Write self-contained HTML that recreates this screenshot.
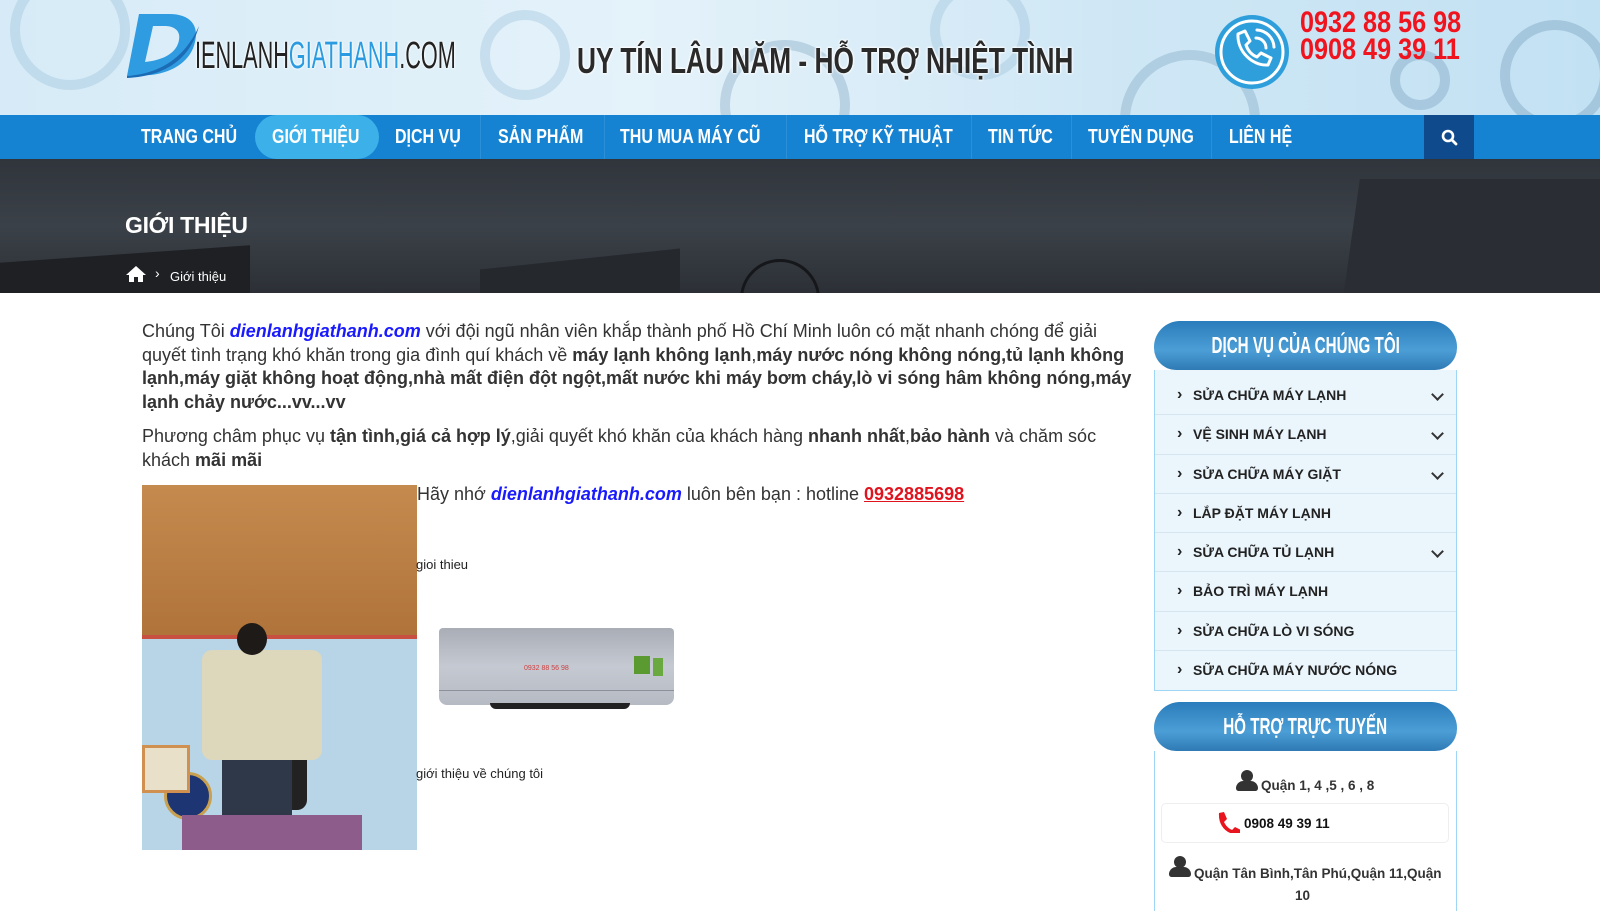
<!DOCTYPE html>
<html><head><meta charset="utf-8"><style>
*{margin:0;padding:0;box-sizing:border-box}
body{width:1600px;height:902px;overflow:hidden;background:#fff;font-family:"Liberation Sans",Arial,sans-serif;position:relative}
.hdr{position:absolute;left:0;top:0;width:1600px;height:115px;background:linear-gradient(90deg,#d6ebf7 0%,#e4f2fa 40%,#cfe7f5 70%,#c2e1f3 100%);overflow:hidden}
.gear{position:absolute;border-radius:50%;border:10px solid rgba(150,190,215,.35)}
.sx{display:inline-block;transform-origin:left center;white-space:nowrap}
.nav{position:absolute;left:0;top:115px;width:1600px;height:44px;background:#1583d2}
.nav a{position:absolute;top:0;height:44px;line-height:44px;color:#fff;font-weight:bold;font-size:20px;text-decoration:none;transform:scaleX(.8);transform-origin:left center;white-space:nowrap}
.sep{position:absolute;top:0;width:1px;height:44px;background:#2c90d8}
.ban{position:absolute;left:0;top:159px;width:1600px;height:134px;background:linear-gradient(180deg,#30353c 0%,#3b4148 50%,#2c3036 100%);overflow:hidden}
.main p{font-size:18px;line-height:23.5px;color:#333}
.lk{color:#1a1aff;font-weight:bold;font-style:italic}
.side{position:absolute;left:1154px;width:303px}
.sh{height:49px;border-radius:26px 26px 22px 22px;background:linear-gradient(180deg,#2a7dbb 0%,#4c9ed6 60%,#2e7ab5 100%);color:#fff;text-align:center;line-height:49px;font-size:23px;font-weight:bold}
.sh span{display:inline-block;transform:scaleX(.66);white-space:nowrap}
.it{height:39.3px;background:#eaf5fc;border-bottom:1.5px solid #d6e6f0;position:relative;font-size:14px;font-weight:bold;color:#222;line-height:39px;padding-left:38px}
.it:before{content:"›";position:absolute;left:22px;top:-1px;font-size:16px}
.chev{position:absolute;right:14px;top:14px;width:9px;height:9px;border-right:2.5px solid #333;border-bottom:2.5px solid #333;transform:rotate(45deg)}
.usr{position:absolute;width:22px;height:22px}
.usr:before{content:"";position:absolute;left:5px;top:0;width:12px;height:12px;border-radius:50%;background:#333}
.usr:after{content:"";position:absolute;left:0;top:11px;width:22px;height:10px;border-radius:8px 8px 3px 3px;background:#333}
</style></head><body>
<div class="hdr">
 <div class="gear" style="left:10px;top:-30px;width:120px;height:120px"></div>
 <div class="gear" style="left:480px;top:10px;width:90px;height:90px"></div>
 <div class="gear" style="left:720px;top:40px;width:130px;height:130px;border-color:rgba(120,160,190,.35)"></div>
 <div class="gear" style="left:930px;top:-20px;width:100px;height:100px"></div>
 <div class="gear" style="left:1120px;top:50px;width:140px;height:140px;border-color:rgba(120,160,190,.35)"></div>
 <div class="gear" style="left:1500px;top:20px;width:110px;height:110px;border-color:rgba(120,160,190,.4)"></div>
 <div class="gear" style="left:1390px;top:50px;width:60px;height:60px;border-color:rgba(120,160,190,.4)"></div>
 <svg style="position:absolute;left:125px;top:12px" width="76" height="66" viewBox="0 0 76 66"><path d="M14 2 H44 C66 2 74 14 70 30 C66 48 50 60 26 63 L2 64 Z M28 14 L20 50 C40 48 52 40 54 28 C56 18 48 14 40 14 Z" fill="#2f9be0" fill-rule="evenodd"/><path d="M2 64 C30 62 58 50 74 14 C66 44 44 64 2 66Z" fill="#1b6bb5"/></svg>
 <div class="sx" style="position:absolute;left:195px;top:35px;font-size:38px;color:#222;transform:scaleX(.57);text-shadow:0 0 3px #fff,0 0 3px #fff">IENLANH<span style="color:#2a9be0">GIATHANH</span>.COM</div>
 <div class="sx" style="position:absolute;left:577px;top:40px;font-size:36px;font-weight:bold;color:#2a2a2a;transform:scaleX(.73);text-shadow:0 0 3px #fff,0 0 3px #fff,0 0 3px #fff">UY TÍN LÂU NĂM - HỖ TRỢ NHIỆT TÌNH</div>
 <svg style="position:absolute;left:1212px;top:12px" width="80" height="80" viewBox="0 0 80 80"><circle cx="40" cy="40" r="37" fill="#2f9fdc"/><circle cx="40" cy="40" r="31" fill="none" stroke="#fff" stroke-width="3"/><path d="M26 22 l7 -3 5 10 -4 4 c2 6 6 10 11 12 l4 -4 10 5 -3 7 c-16 1 -31 -14 -30 -31z" fill="none" stroke="#fff" stroke-width="3" stroke-linejoin="round"/><path d="M44 26 a10 10 0 0 1 10 10 M45 18 a18 18 0 0 1 17 17" fill="none" stroke="#fff" stroke-width="3" stroke-linecap="round"/></svg>
 <div class="sx" style="position:absolute;left:1300px;top:9px;font-size:30px;font-weight:bold;color:#f0141e;line-height:27px;transform:scaleX(.84)">0932 88 56 98<br>0908 49 39 11</div>
</div>
<div class="nav">
 <a style="left:141px">TRANG CHỦ</a>
 <div style="position:absolute;left:255px;top:0;width:124px;height:44px;border-radius:22px;background:#3cb1e9"></div>
 <a style="left:272px">GIỚI THIỆU</a>
 <a style="left:395px">DỊCH VỤ</a><div class="sep" style="left:480px"></div>
 <a style="left:498px">SẢN PHẨM</a><div class="sep" style="left:604px"></div>
 <a style="left:620px">THU MUA MÁY CŨ</a><div class="sep" style="left:786px"></div>
 <a style="left:804px">HỖ TRỢ KỸ THUẬT</a><div class="sep" style="left:971px"></div>
 <a style="left:988px">TIN TỨC</a><div class="sep" style="left:1071px"></div>
 <a style="left:1088px">TUYỂN DỤNG</a><div class="sep" style="left:1211px"></div>
 <a style="left:1229px">LIÊN HỆ</a>
 <div style="position:absolute;left:1424px;top:0;width:50px;height:44px;background:#0f4b8c"><svg style="position:absolute;left:17px;top:14px" width="17" height="17" viewBox="0 0 17 17"><circle cx="7" cy="7" r="5" fill="none" stroke="#fff" stroke-width="2.6"/><path d="M11 11 L15 15" stroke="#fff" stroke-width="2.8" stroke-linecap="round"/></svg></div>
</div>
<div class="ban">
 <div style="position:absolute;left:0;top:95px;width:250px;height:60px;background:#1e2024;transform:skewY(-4deg)"></div>
 <div style="position:absolute;left:480px;top:100px;width:200px;height:60px;background:#25282d;transform:skewY(-6deg)"></div>
 <div style="position:absolute;left:1350px;top:20px;width:260px;height:140px;background:#2a2e34;transform:skewX(-8deg)"></div>
 <div style="position:absolute;left:740px;top:100px;width:80px;height:80px;border-radius:50%;border:3px solid #15171a"></div>
 <div style="position:absolute;left:125px;top:53px;color:#fff;font-weight:bold;font-size:23px;letter-spacing:-.3px">GIỚI THIỆU</div>
 <svg style="position:absolute;left:125px;top:106px" width="22" height="18" viewBox="0 0 22 18"><path d="M11 1 L21 10 H18 V17 H13 V12 H9 V17 H4 V10 H1 Z" fill="#fff"/></svg>
 <div style="position:absolute;left:155px;top:106px;color:#fff;font-size:14px">›</div>
 <div style="position:absolute;left:170px;top:110px;color:#fff;font-size:13px">Giới thiệu</div>
</div>
<div class="main" style="position:absolute;left:142px;top:320px;width:995px">
 <p>Chúng Tôi <span class="lk">dienlanhgiathanh.com</span> với đội ngũ nhân viên khắp thành phố Hồ Chí Minh luôn có mặt nhanh chóng để giải quyết tình trạng khó khăn trong gia đình quí khách về <b>máy lạnh không lạnh</b>,<b>máy nước nóng không nóng,tủ lạnh không lạnh,máy giặt không hoạt động,nhà mất điện đột ngột,mất nước khi máy bơm cháy,lò vi sóng hâm không nóng,máy lạnh chảy nước...vv...vv</b></p>
 <p style="margin-top:11px">Phương châm phục vụ <b>tận tình,giá cả hợp lý</b>,giải quyết khó khăn của khách hàng <b>nhanh nhất</b>,<b>bảo hành</b> và chăm sóc khách <b>mãi mãi</b></p>
</div>
<div style="position:absolute;left:142px;top:485px;width:275px;height:365px;background:#b7d5e6;overflow:hidden">
 <div style="position:absolute;left:0;top:0;width:275px;height:150px;background:linear-gradient(180deg,#c48a4e,#b0743a)"></div>
 <div style="position:absolute;left:0;top:150px;width:275px;height:4px;background:#c85040"></div>
 <div style="position:absolute;left:95px;top:175px;width:70px;height:150px;background:#222;border-radius:10px"></div>
 <div style="position:absolute;left:60px;top:165px;width:120px;height:110px;background:#ddd8bc;border-radius:10px"></div>
 <div style="position:absolute;left:95px;top:138px;width:30px;height:32px;background:#1e1a18;border-radius:50%"></div>
 <div style="position:absolute;left:80px;top:275px;width:70px;height:90px;background:#2e3848"></div>
 <div style="position:absolute;left:22px;top:287px;width:48px;height:48px;border-radius:50%;background:#1d3572;border:3px solid #c9a050"></div>
 <div style="position:absolute;left:0;top:260px;width:48px;height:48px;background:#e8e0c8;border:3px solid #d09050"></div>
 <div style="position:absolute;left:40px;top:330px;width:180px;height:35px;background:#8d5c8a"></div>
</div>
<div style="position:absolute;left:417px;top:484px;font-size:18px;color:#333">Hãy nhớ <span class="lk">dienlanhgiathanh.com</span> luôn bên bạn : hotline <span style="color:#e0141e;font-weight:bold;text-decoration:underline">0932885698</span></div>
<div style="position:absolute;left:416px;top:557px;font-size:13px;color:#222">gioi thieu</div>
<div style="position:absolute;left:439px;top:628px;width:235px;height:77px;border-radius:4px 4px 8px 8px;background:linear-gradient(180deg,#a9adb6 0%,#c5c9d2 50%,#b5bac3 100%)">
 <div style="position:absolute;left:0;top:62px;width:235px;height:1px;background:#8b909a"></div>
 <div style="position:absolute;left:85px;top:37px;font-size:7px;color:#d04040">0932 88 56 98</div>
 <div style="position:absolute;left:195px;top:28px;width:16px;height:18px;background:#5a9a30"></div>
 <div style="position:absolute;left:214px;top:30px;width:10px;height:18px;background:#6aa840"></div>
</div>
<div style="position:absolute;left:490px;top:703px;width:140px;height:6px;background:#222;border-radius:0 0 30px 30px"></div>
<div style="position:absolute;left:416px;top:766px;font-size:13px;color:#222">giới thiệu về chúng tôi</div>

<div class="side" style="top:321px">
 <div class="sh"><span>DỊCH VỤ CỦA CHÚNG TÔI</span></div>
 <div style="border-left:1.5px solid #9fd6f5;border-right:1.5px solid #9fd6f5;border-bottom:1.5px solid #9fd6f5;padding-top:6px;background:#eaf5fc">
 <div class="it">SỬA CHỮA MÁY LẠNH<span class="chev"></span></div>
 <div class="it">VỆ SINH MÁY LẠNH<span class="chev"></span></div>
 <div class="it">SỬA CHỮA MÁY GIẶT<span class="chev"></span></div>
 <div class="it">LẮP ĐẶT MÁY LẠNH</div>
 <div class="it">SỬA CHỮA TỦ LẠNH<span class="chev"></span></div>
 <div class="it">BẢO TRÌ MÁY LẠNH</div>
 <div class="it">SỬA CHỮA LÒ VI SÓNG</div>
 <div class="it" style="border-bottom:none">SỮA CHỮA MÁY NƯỚC NÓNG</div>
 </div>
</div>
<div class="side" style="top:702px;height:200px">
 <div class="sh"><span>HỖ TRỢ TRỰC TUYẾN</span></div>
 <div style="position:absolute;left:0;top:49px;width:303px;height:160px;border-left:1.5px solid #9fd6f5;border-right:1.5px solid #9fd6f5"></div>
 <div style="font-size:13.5px;font-weight:bold;color:#333">
  <div class="usr" style="left:82px;top:68px"></div>
  <div style="position:absolute;left:107px;top:76px">Quận 1, 4 ,5 , 6 , 8</div>
  <div style="position:absolute;left:7px;top:101px;width:288px;height:40px;border:1px solid #eee;border-radius:5px">
   <svg style="position:absolute;left:54px;top:7px" width="24" height="22" viewBox="0 0 24 22"><path d="M3 2 l5 -1 3 7 -3 3 c2 4 4 6 8 8 l3 -3 6 3 -1 5 c-13 0 -22 -9 -21 -22z" fill="#e8141e"/></svg>
   <div style="position:absolute;left:82px;top:12px;color:#111">0908 49 39 11</div>
  </div>
  <div class="usr" style="left:15px;top:154px"></div>
  <div style="position:absolute;left:40px;top:164px;white-space:nowrap">Quận Tân Bình,Tân Phú,Quận 11,Quận</div>
  <div style="position:absolute;left:141px;top:186px">10</div>
 </div>
</div>
</body></html>
